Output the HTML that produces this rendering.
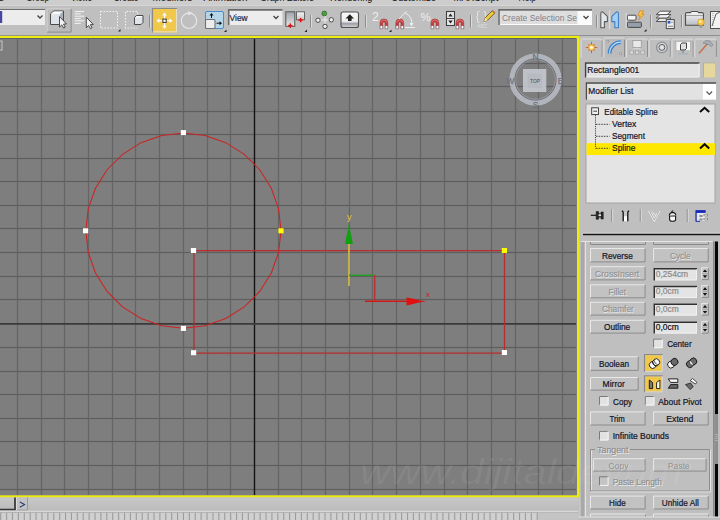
<!DOCTYPE html>
<html><head><meta charset="utf-8"><style>
*{margin:0;padding:0;box-sizing:border-box}
html,body{width:720px;height:520px;overflow:hidden;background:#bfbfbf;font-family:"Liberation Sans",sans-serif}
.a{position:absolute}
.t{position:absolute;white-space:nowrap;font-size:10px;line-height:12px;color:#101010}
</style></head><body>
<div class="a" style="left:0;top:0;width:720px;height:5px;background:#cdcdcd"></div>
<div class="a" style="left:0;top:5px;width:720px;height:30px;background:#bfbfbf;border-top:1px solid #d6d6d6"></div>
<div class="a" style="left:0;top:35px;width:720px;height:1px;background:#8e8e92"></div>
<svg style="position:absolute;left:0;top:0" width="720" height="520" viewBox="0 0 720 520">
<rect x="0" y="35.9" width="579" height="461.5" fill="#ecec10"/>
<rect x="0" y="38.3" width="577" height="457" fill="#7e7e7e"/>
<g stroke="#000" stroke-opacity="0.03" stroke-width="3"><line x1="17.5" y1="38" x2="17.5" y2="495"/><line x1="41.5" y1="38" x2="41.5" y2="495"/><line x1="64.5" y1="38" x2="64.5" y2="495"/><line x1="88.5" y1="38" x2="88.5" y2="495"/><line x1="112.5" y1="38" x2="112.5" y2="495"/><line x1="135.5" y1="38" x2="135.5" y2="495"/><line x1="159.5" y1="38" x2="159.5" y2="495"/><line x1="183.5" y1="38" x2="183.5" y2="495"/><line x1="207.5" y1="38" x2="207.5" y2="495"/><line x1="230.5" y1="38" x2="230.5" y2="495"/><line x1="278.5" y1="38" x2="278.5" y2="495"/><line x1="301.5" y1="38" x2="301.5" y2="495"/><line x1="325.5" y1="38" x2="325.5" y2="495"/><line x1="349.5" y1="38" x2="349.5" y2="495"/><line x1="372.5" y1="38" x2="372.5" y2="495"/><line x1="396.5" y1="38" x2="396.5" y2="495"/><line x1="420.5" y1="38" x2="420.5" y2="495"/><line x1="444.5" y1="38" x2="444.5" y2="495"/><line x1="467.5" y1="38" x2="467.5" y2="495"/><line x1="491.5" y1="38" x2="491.5" y2="495"/><line x1="515.5" y1="38" x2="515.5" y2="495"/><line x1="538.5" y1="38" x2="538.5" y2="495"/><line x1="562.5" y1="38" x2="562.5" y2="495"/><line x1="0" y1="63.5" x2="576" y2="63.5"/><line x1="0" y1="86.5" x2="576" y2="86.5"/><line x1="0" y1="111.5" x2="576" y2="111.5"/><line x1="0" y1="134.5" x2="576" y2="134.5"/><line x1="0" y1="158.5" x2="576" y2="158.5"/><line x1="0" y1="181.5" x2="576" y2="181.5"/><line x1="0" y1="205.5" x2="576" y2="205.5"/><line x1="0" y1="228.5" x2="576" y2="228.5"/><line x1="0" y1="252.5" x2="576" y2="252.5"/><line x1="0" y1="276.5" x2="576" y2="276.5"/><line x1="0" y1="299.5" x2="576" y2="299.5"/><line x1="0" y1="347.5" x2="576" y2="347.5"/><line x1="0" y1="371.5" x2="576" y2="371.5"/><line x1="0" y1="394.5" x2="576" y2="394.5"/><line x1="0" y1="418.5" x2="576" y2="418.5"/><line x1="0" y1="441.5" x2="576" y2="441.5"/><line x1="0" y1="465.5" x2="576" y2="465.5"/><line x1="0" y1="489.5" x2="576" y2="489.5"/></g><g stroke="#656565" stroke-width="1"><line x1="17.5" y1="38" x2="17.5" y2="495"/><line x1="41.5" y1="38" x2="41.5" y2="495"/><line x1="64.5" y1="38" x2="64.5" y2="495"/><line x1="88.5" y1="38" x2="88.5" y2="495"/><line x1="112.5" y1="38" x2="112.5" y2="495"/><line x1="135.5" y1="38" x2="135.5" y2="495"/><line x1="159.5" y1="38" x2="159.5" y2="495"/><line x1="183.5" y1="38" x2="183.5" y2="495"/><line x1="207.5" y1="38" x2="207.5" y2="495"/><line x1="230.5" y1="38" x2="230.5" y2="495"/><line x1="278.5" y1="38" x2="278.5" y2="495"/><line x1="301.5" y1="38" x2="301.5" y2="495"/><line x1="325.5" y1="38" x2="325.5" y2="495"/><line x1="349.5" y1="38" x2="349.5" y2="495"/><line x1="372.5" y1="38" x2="372.5" y2="495"/><line x1="396.5" y1="38" x2="396.5" y2="495"/><line x1="420.5" y1="38" x2="420.5" y2="495"/><line x1="444.5" y1="38" x2="444.5" y2="495"/><line x1="467.5" y1="38" x2="467.5" y2="495"/><line x1="491.5" y1="38" x2="491.5" y2="495"/><line x1="515.5" y1="38" x2="515.5" y2="495"/><line x1="538.5" y1="38" x2="538.5" y2="495"/><line x1="562.5" y1="38" x2="562.5" y2="495"/></g><g stroke="#5e5e5e" stroke-width="1"><line x1="0" y1="63.5" x2="576" y2="63.5"/><line x1="0" y1="86.5" x2="576" y2="86.5"/><line x1="0" y1="111.5" x2="576" y2="111.5"/><line x1="0" y1="134.5" x2="576" y2="134.5"/><line x1="0" y1="158.5" x2="576" y2="158.5"/><line x1="0" y1="181.5" x2="576" y2="181.5"/><line x1="0" y1="205.5" x2="576" y2="205.5"/><line x1="0" y1="228.5" x2="576" y2="228.5"/><line x1="0" y1="252.5" x2="576" y2="252.5"/><line x1="0" y1="276.5" x2="576" y2="276.5"/><line x1="0" y1="299.5" x2="576" y2="299.5"/><line x1="0" y1="347.5" x2="576" y2="347.5"/><line x1="0" y1="371.5" x2="576" y2="371.5"/><line x1="0" y1="394.5" x2="576" y2="394.5"/><line x1="0" y1="418.5" x2="576" y2="418.5"/><line x1="0" y1="441.5" x2="576" y2="441.5"/><line x1="0" y1="465.5" x2="576" y2="465.5"/><line x1="0" y1="489.5" x2="576" y2="489.5"/></g><line x1="254.5" y1="38" x2="254.5" y2="495" stroke="#141414" stroke-width="1.4"/><line x1="0" y1="323.9" x2="576" y2="323.9" stroke="#3a3a3a" stroke-width="1.8"/>
<line x1="0" y1="38.5" x2="576" y2="38.5" stroke="#5e5e6a" stroke-width="1"/>

<circle cx="535.5" cy="79.5" r="23.2" fill="none" stroke="#b8bcc4" stroke-opacity="0.88" stroke-width="5.8"/>
<circle cx="535.5" cy="79.5" r="20.6" fill="none" stroke="#50545e" stroke-width="0.8"/>
<circle cx="535.5" cy="79.5" r="19.8" fill="none" stroke="#a8acb4" stroke-opacity="0.7" stroke-width="0.8"/>
<rect x="523" y="69" width="23.3" height="23" fill="#c6c9d0" fill-opacity="0.9"/>
<rect x="527.5" y="73.5" width="14.5" height="14.5" fill="#b6b9c0" fill-opacity="0.9"/>
<text x="535" y="83.2" font-size="6" fill="#484c56" text-anchor="middle" font-family="Liberation Sans" textLength="10" lengthAdjust="spacingAndGlyphs">TOP</text>
<g font-family="Liberation Sans" font-size="8.5" fill="#70747f" stroke="#70747f" stroke-width="0.25" text-anchor="middle">
<text x="535.5" y="59.5">N</text>
<text x="535.5" y="108">S</text>
<text x="510.3" y="83.5">W</text>
<text x="560.5" y="83.5">E</text>
</g>

<polygon points="281.00,230.60 278.55,252.32 271.33,272.95 259.71,291.45 244.25,306.91 225.75,318.53 205.12,325.75 183.40,328.20 161.68,325.75 141.05,318.53 122.55,306.91 107.09,291.45 95.47,272.95 88.25,252.32 85.80,230.60 88.25,208.88 95.47,188.25 107.09,169.75 122.55,154.29 141.05,142.67 161.68,135.45 183.40,133.00 205.12,135.45 225.75,142.67 244.25,154.29 259.71,169.75 271.33,188.25 278.55,208.88" fill="none" stroke="#cc2424" stroke-width="1.05"/><path d="M193.95,250.5 L504.5,250.5 L504.5,353.1 L193.95,353.1 Z" fill="none" stroke="#b82c2c" stroke-width="1.25"/><rect x="180.80" y="130.10" width="5.2" height="5" fill="#fff"/><rect x="83.00" y="228.30" width="5.2" height="5" fill="#fff"/><rect x="278.40" y="228.30" width="5.2" height="5" fill="#ffff00"/><rect x="180.80" y="325.90" width="5.2" height="5" fill="#fff"/><rect x="190.90" y="248.00" width="5.2" height="5" fill="#fff"/><rect x="501.80" y="248.00" width="5.2" height="5" fill="#ffff00"/><rect x="191.00" y="350.20" width="5.2" height="5" fill="#fff"/><rect x="501.80" y="350.00" width="5.2" height="5" fill="#fff"/>
<line x1="349" y1="244" x2="349" y2="286" stroke="#d8c040" stroke-width="1.6"/>
<polygon points="348.9,223.5 350.2,231 351.8,238 352.9,244 345,244 346.1,238 347.7,231" fill="#10a010"/>
<text x="347" y="220" font-size="9" fill="#e8c830" font-family="Liberation Sans">y</text>
<line x1="349" y1="275.3" x2="375" y2="275.3" stroke="#20a020" stroke-width="1.4"/>
<line x1="374.7" y1="275" x2="374.7" y2="301.3" stroke="#c03030" stroke-width="1.4"/>
<line x1="365" y1="301.3" x2="407" y2="301.3" stroke="#d01818" stroke-width="1.5"/>
<polygon points="406.5,297.4 412,298.4 419,300.2 426,301.3 419,302.4 412,304.2 406.5,305.5" fill="#e01010"/>
<text x="426" y="297" font-size="8" fill="#d02020" font-family="Liberation Sans">x</text>

<rect x="-3" y="41" width="5" height="9" fill="none" stroke="#c8c8c8" stroke-width="1"/>
</svg>
<svg class="a" style="left:0;top:0" width="720" height="36" viewBox="0 0 720 36"><text x="-22" y="0.6" font-size="11" fill="#141414" font-family="Liberation Sans" textLength="26" lengthAdjust="spacingAndGlyphs">Tools</text><text x="26" y="0.6" font-size="11" fill="#141414" font-family="Liberation Sans" textLength="23" lengthAdjust="spacingAndGlyphs">Group</text><text x="71" y="0.6" font-size="11" fill="#141414" font-family="Liberation Sans" textLength="21" lengthAdjust="spacingAndGlyphs">Views</text><text x="113.5" y="0.6" font-size="11" fill="#141414" font-family="Liberation Sans" textLength="25" lengthAdjust="spacingAndGlyphs">Create</text><text x="152.5" y="0.6" font-size="11" fill="#141414" font-family="Liberation Sans" textLength="40" lengthAdjust="spacingAndGlyphs">Modifiers</text><text x="203.5" y="0.6" font-size="11" fill="#141414" font-family="Liberation Sans" textLength="44" lengthAdjust="spacingAndGlyphs">Animation</text><text x="260" y="0.6" font-size="11" fill="#141414" font-family="Liberation Sans" textLength="54" lengthAdjust="spacingAndGlyphs">Graph Editors</text><text x="330" y="0.6" font-size="11" fill="#141414" font-family="Liberation Sans" textLength="42.5" lengthAdjust="spacingAndGlyphs">Rendering</text><text x="391" y="0.6" font-size="11" fill="#141414" font-family="Liberation Sans" textLength="45" lengthAdjust="spacingAndGlyphs">Customize</text><text x="453.5" y="0.6" font-size="11" fill="#141414" font-family="Liberation Sans" textLength="45" lengthAdjust="spacingAndGlyphs">MAXScript</text><text x="518.5" y="0.6" font-size="11" fill="#141414" font-family="Liberation Sans" textLength="17.5" lengthAdjust="spacingAndGlyphs">Help</text><line x1="149.5" y1="15" x2="149.5" y2="27.5" stroke="#8c8c8c" stroke-width="1"/><line x1="150.5" y1="15" x2="150.5" y2="27.5" stroke="#dcdcdc" stroke-width="1"/><line x1="310.5" y1="15" x2="310.5" y2="27.5" stroke="#8c8c8c" stroke-width="1"/><line x1="311.5" y1="15" x2="311.5" y2="27.5" stroke="#dcdcdc" stroke-width="1"/><line x1="365.5" y1="15" x2="365.5" y2="27.5" stroke="#8c8c8c" stroke-width="1"/><line x1="366.5" y1="15" x2="366.5" y2="27.5" stroke="#dcdcdc" stroke-width="1"/><line x1="470.5" y1="15" x2="470.5" y2="27.5" stroke="#8c8c8c" stroke-width="1"/><line x1="471.5" y1="15" x2="471.5" y2="27.5" stroke="#dcdcdc" stroke-width="1"/><line x1="596.5" y1="15" x2="596.5" y2="27.5" stroke="#8c8c8c" stroke-width="1"/><line x1="597.5" y1="15" x2="597.5" y2="27.5" stroke="#dcdcdc" stroke-width="1"/><line x1="650.5" y1="15" x2="650.5" y2="27.5" stroke="#8c8c8c" stroke-width="1"/><line x1="651.5" y1="15" x2="651.5" y2="27.5" stroke="#dcdcdc" stroke-width="1"/><line x1="681.5" y1="15" x2="681.5" y2="27.5" stroke="#8c8c8c" stroke-width="1"/><line x1="682.5" y1="15" x2="682.5" y2="27.5" stroke="#dcdcdc" stroke-width="1"/><rect x="-2" y="9" width="47" height="16" fill="#ececec"/><line x1="-2" y1="9.5" x2="45" y2="9.5" stroke="#6e6e6e"/><rect x="0" y="11" width="2.2" height="12" fill="#4646a0"/><polyline points="37.5,15.5 40,18 42.5,15.5" fill="none" stroke="#444" stroke-width="1.3"/><rect x="46.6" y="8.3" width="25" height="24.3" fill="#bababa"/><path d="M47.1,32.6 L47.1,8.8 L71.5,8.8" fill="none" stroke="#d2d2d2" stroke-width="1"/><path d="M47.1,32.1 L71.1,32.1 L71.1,8.8" fill="none" stroke="#8a8a8a" stroke-width="1"/><path d="M50.5,14 L53.5,11 L63.5,11 L63.5,21.5 L60.5,24.5 L50.5,24.5 Z" fill="#dfe4ea" stroke="#4a4a4a" stroke-width="1"/><path d="M51,14 L54,11.5 L63,11.5 L60,14 Z" fill="#fafafa"/><path d="M60,14 L63,11.5 L63,21.5 L60,24 Z" fill="#aab0b8"/><path d="M59.5,16.6 L59.5,27.1 L61.8,24.900000000000002 L63.7,28.1 L65.3,27.1 L63.5,24.1 L66.5,23.900000000000002 Z" fill="#f4f4f4" stroke="#3a3a3a" stroke-width="0.9" stroke-linejoin="round"/><line x1="74.7" y1="11.5" x2="84.2" y2="11.5" stroke="#f0f0f0" stroke-width="1.1"/><line x1="74.7" y1="13.8" x2="80.7" y2="13.8" stroke="#f0f0f0" stroke-width="1.1"/><line x1="74.7" y1="16.2" x2="84.2" y2="16.2" stroke="#f0f0f0" stroke-width="1.1"/><line x1="74.7" y1="18.6" x2="80.7" y2="18.6" stroke="#f0f0f0" stroke-width="1.1"/><line x1="74.7" y1="20.8" x2="84.2" y2="20.8" stroke="#f0f0f0" stroke-width="1.1"/><line x1="74.7" y1="23.4" x2="80.7" y2="23.4" stroke="#f0f0f0" stroke-width="1.1"/><path d="M86.3,17.2 L86.3,27.7 L88.6,25.5 L90.5,28.7 L92.1,27.7 L90.3,24.7 L93.3,24.5 Z" fill="#f4f4f4" stroke="#3a3a3a" stroke-width="0.9" stroke-linejoin="round"/><rect x="100.5" y="11.5" width="17" height="16.5" fill="none" stroke="#f2f2f2" stroke-width="1.1" stroke-dasharray="1.6,1.4"/><polygon points="118,31.5 120.5,29 120.5,31.5" fill="#202020"/><path d="M137.5,14 L137.5,11.5 L125.5,11.5 L125.5,28 L137.5,28" fill="none" stroke="#f2f2f2" stroke-width="1.1" stroke-dasharray="1.6,1.4"/><path d="M134.5,17.5 L136.5,15.5 L143,15.5 L143,22.5 L141,24.5 L134.5,24.5 Z" fill="#dfe4ea" stroke="#4a4a4a" stroke-width="1"/><path d="M135,17.5 L137,16 L142.5,16 L140.5,17.5 Z" fill="#fff"/><rect x="152" y="8.5" width="25" height="24" fill="#f0c84c"/><path d="M152.5,32.5 L152.5,8.5 L177,8.5" fill="none" stroke="#8a8a8a" stroke-width="1.2"/><path d="M153,31.8 L176.5,31.8 L176.5,9" fill="none" stroke="#e8e0c0" stroke-width="1"/><g fill="#fbfbfb"><polygon points="164.5,12.6 162.1,15.6 166.9,15.6"/><polygon points="164.5,28.8 162.1,25.8 166.9,25.8"/><polygon points="156.4,20.7 159.4,18.3 159.4,23.1"/><polygon points="172.6,20.7 169.6,18.3 169.6,23.1"/><rect x="163.9" y="15.3" width="1.3" height="3.5"/><rect x="163.9" y="22.6" width="1.3" height="3.5"/><rect x="159.2" y="20.05" width="3.5" height="1.3"/><rect x="166.4" y="20.05" width="3.5" height="1.3"/></g><rect x="162.9" y="19.1" width="3.3" height="3.3" fill="#fff" stroke="#222" stroke-width="0.9"/><circle cx="189" cy="20.8" r="7.7" fill="none" stroke="#e6e6e6" stroke-width="1.1"/><polygon points="188,11 192.5,13 188,15.5" fill="#e6e6e6"/><rect x="205.5" y="11.5" width="18" height="17" rx="1.5" fill="#b4d6e8" stroke="#4c8cc8" stroke-width="1"/><rect x="205.5" y="19.5" width="9.5" height="9" rx="1" fill="#ececec" stroke="#707070" stroke-width="1.1"/><line x1="211.5" y1="14" x2="211.5" y2="18" stroke="#111" stroke-width="1"/><polygon points="211.5,13 209.5,15.5 213.5,15.5" fill="#111"/><line x1="216.5" y1="23.2" x2="221" y2="23.2" stroke="#111" stroke-width="1"/><polygon points="222,23.2 219.5,21.2 219.5,25.2" fill="#111"/><polygon points="224,32.0 226.5,29.5 226.5,32.0" fill="#202020"/><rect x="228" y="9.5" width="54.5" height="15.5" fill="#ececec"/><path d="M228.7,25 L228.7,9.9 L282.5,9.9" fill="none" stroke="#6a6a6a" stroke-width="1.6"/><text x="229.6" y="20.8" font-size="9.6" fill="#202040" stroke="#202040" stroke-width="0.2" font-family="Liberation Sans" textLength="18" lengthAdjust="spacingAndGlyphs">View</text><polyline points="273.5,16 276,18.5 278.5,16" fill="none" stroke="#444" stroke-width="1.3"/><defs><linearGradient id="pg" x1="0" y1="0" x2="0" y2="1"><stop offset="0" stop-color="#a0a4ac"/><stop offset="1" stop-color="#e4e4e4"/></linearGradient><linearGradient id="pg2" x1="0" y1="0" x2="0" y2="1"><stop offset="0" stop-color="#f4f4f4"/><stop offset="1" stop-color="#c8c8c8"/></linearGradient><linearGradient id="kb" x1="0" y1="0" x2="0" y2="1"><stop offset="0" stop-color="#fafafa"/><stop offset="0.6" stop-color="#eeeeee"/><stop offset="0.75" stop-color="#9ca0a8"/><stop offset="1" stop-color="#d8d8d8"/></linearGradient></defs><rect x="285.8" y="11.8" width="9" height="14.5" fill="url(#pg)" stroke="#555" stroke-width="1"/><rect x="296.5" y="11.8" width="8" height="8" fill="url(#pg2)" stroke="#666" stroke-width="1"/><g fill="#e01010"><rect x="289.6" y="23.4" width="1.4" height="4.4"/><rect x="288.1" y="24.9" width="4.4" height="1.4"/><rect x="299.9" y="17.9" width="1.4" height="4.4"/><rect x="298.4" y="19.4" width="4.4" height="1.4"/></g><polygon points="304.5,32.0 307.0,29.5 307.0,32.0" fill="#202020"/><line x1="318" y1="20" x2="331" y2="20" stroke="#e8e8e8" stroke-width="1.2"/><line x1="325" y1="14" x2="325" y2="26" stroke="#e8e8e8" stroke-width="1.2"/><g fill="#f0f0f0" stroke="#4a4a4a" stroke-width="1"><circle cx="318" cy="20.2" r="2.2"/><circle cx="331.3" cy="19.8" r="2.2"/><circle cx="325" cy="26.4" r="2.2"/></g><circle cx="324.3" cy="13.5" r="2.4" fill="#50a040" stroke="#2a6a2a" stroke-width="0.8"/><rect x="341" y="12" width="17.5" height="15.5" rx="2" fill="url(#kb)" stroke="#505050" stroke-width="1.1"/><polygon points="349.8,14.2 345.5,18.5 348,18.5 348,21 351.6,21 351.6,18.5 354,18.5" fill="#222"/><text x="372" y="21.3" font-size="12" fill="#eeeeee" font-family="Liberation Sans">2</text><path d="M380.0,28.8 L380.0,22.8 A3.9,3.9 0 0 1 387.8,22.8 L387.8,28.8 L385.1,28.8 L385.1,23.1 A1.2,1.2 0 0 0 382.7,23.1 L382.7,28.8 Z" fill="#c83c3c" stroke="#8a3030" stroke-width="0.5"/><path d="M380.8,22.400000000000002 A3.2,3.2 0 0 1 387.0,22.400000000000002" fill="none" stroke="#e88080" stroke-width="0.8"/><rect x="380.0" y="25.8" width="2.7" height="3" fill="#9aa2ae"/><rect x="385.1" y="25.8" width="2.7" height="3" fill="#9aa2ae"/><rect x="380.7" y="26.1" width="1.4" height="2.2" fill="#ffffff"/><rect x="385.8" y="26.1" width="1.4" height="2.2" fill="#ffffff"/><polygon points="389,32.0 391.5,29.5 391.5,32.0" fill="#202020"/><path d="M395.8,28.8 L395.8,22.8 A3.9,3.9 0 0 1 403.6,22.8 L403.6,28.8 L400.90000000000003,28.8 L400.90000000000003,23.1 A1.2,1.2 0 0 0 398.5,23.1 L398.5,28.8 Z" fill="#c83c3c" stroke="#8a3030" stroke-width="0.5"/><path d="M396.6,22.400000000000002 A3.2,3.2 0 0 1 402.8,22.400000000000002" fill="none" stroke="#e88080" stroke-width="0.8"/><rect x="395.8" y="25.8" width="2.7" height="3" fill="#9aa2ae"/><rect x="400.90000000000003" y="25.8" width="2.7" height="3" fill="#9aa2ae"/><rect x="396.5" y="26.1" width="1.4" height="2.2" fill="#ffffff"/><rect x="401.6" y="26.1" width="1.4" height="2.2" fill="#ffffff"/><path d="M399,19 L406.5,11 M405,13 A10,10 0 0 1 411.5,25" fill="none" stroke="#eeeeee" stroke-width="1"/><line x1="405" y1="27.5" x2="415" y2="27.5" stroke="#eeeeee"/><polygon points="411.5,26.5 409.5,23 413.5,23" fill="#eee"/><text x="420.5" y="21.3" font-size="11.5" fill="#eeeeee" font-family="Liberation Sans">%</text><path d="M431.0,28.8 L431.0,22.8 A3.9,3.9 0 0 1 438.8,22.8 L438.8,28.8 L436.1,28.8 L436.1,23.1 A1.2,1.2 0 0 0 433.7,23.1 L433.7,28.8 Z" fill="#c83c3c" stroke="#8a3030" stroke-width="0.5"/><path d="M431.8,22.400000000000002 A3.2,3.2 0 0 1 438.0,22.400000000000002" fill="none" stroke="#e88080" stroke-width="0.8"/><rect x="431.0" y="25.8" width="2.7" height="3" fill="#9aa2ae"/><rect x="436.1" y="25.8" width="2.7" height="3" fill="#9aa2ae"/><rect x="431.7" y="26.1" width="1.4" height="2.2" fill="#ffffff"/><rect x="436.8" y="26.1" width="1.4" height="2.2" fill="#ffffff"/><rect x="446.5" y="11.5" width="8" height="14" fill="#e8e8e8" stroke="#404040" stroke-width="1.1"/><line x1="446.5" y1="18.5" x2="454.5" y2="18.5" stroke="#404040"/><polygon points="450.5,13.5 448.3,16.5 452.7,16.5" fill="#222"/><polygon points="450.5,23.5 448.3,20.5 452.7,20.5" fill="#222"/><path d="M456.0,28.8 L456.0,22.8 A3.9,3.9 0 0 1 463.8,22.8 L463.8,28.8 L461.1,28.8 L461.1,23.1 A1.2,1.2 0 0 0 458.7,23.1 L458.7,28.8 Z" fill="#c83c3c" stroke="#8a3030" stroke-width="0.5"/><path d="M456.8,22.400000000000002 A3.2,3.2 0 0 1 463.0,22.400000000000002" fill="none" stroke="#e88080" stroke-width="0.8"/><rect x="456.0" y="25.8" width="2.7" height="3" fill="#9aa2ae"/><rect x="461.1" y="25.8" width="2.7" height="3" fill="#9aa2ae"/><rect x="456.7" y="26.1" width="1.4" height="2.2" fill="#ffffff"/><rect x="461.8" y="26.1" width="1.4" height="2.2" fill="#ffffff"/><path d="M479.5,11.5 L478.6,11.5 Q477.6,11.5 477.6,12.8 L477.6,15.6 Q477.6,16.8 476.4,17 Q477.6,17.2 477.6,18.4 L477.6,21.2 Q477.6,22.5 478.6,22.5 L479.5,22.5 M483.5,11.5 L484.4,11.5 Q485.4,11.5 485.4,12.8 L485.4,15.6 Q485.4,16.8 486.6,17 Q485.4,17.2 485.4,18.4 L485.4,21.2 Q485.4,22.5 484.4,22.5 L483.5,22.5" fill="none" stroke="#e8e8e8" stroke-width="1"/><text x="477" y="28.3" font-size="4.8" fill="#dedede" font-family="Liberation Sans" textLength="10.5" lengthAdjust="spacingAndGlyphs">ABC</text><path d="M484,21.6 L485.2,17.8 L492.2,10.8 L494.6,13.2 L487.6,20.2 Z" fill="#f2c838" stroke="#5a4a20" stroke-width="0.8" stroke-linejoin="round"/><path d="M484,21.6 L485.2,17.8 L487.6,20.2 Z" fill="#f4e4c4"/><path d="M492.2,10.8 L494.6,13.2 L495.4,12.4 L493,10 Z" fill="#c87040"/><rect x="498.5" y="9.5" width="93.5" height="15.5" fill="#fbfbfb"/><rect x="500" y="11" width="77.5" height="13" fill="#dedede"/><path d="M499,25 L499,9.9 L592,9.9" fill="none" stroke="#6a6a6a" stroke-width="1.6"/><text x="502" y="21" font-size="9.8" fill="#80808c" font-family="Liberation Sans" textLength="75" lengthAdjust="spacingAndGlyphs">Create Selection Se</text><polyline points="583.5,16 586,18.5 588.5,16" fill="none" stroke="#444" stroke-width="1.3"/><path d="M600.8,27.8 L600.8,13.6 Q600.8,11.8 602.6,11.8 L607.4,16.4 L607.4,21.6 L604.4,21.6 L604.4,27.8 Z" fill="#e2e5ea" stroke="#5a5a5a" stroke-width="1.05" stroke-linejoin="round"/><path d="M618.4,27.8 L618.4,13.6 Q618.4,11.8 616.6,11.8 L611.8,16.4 L611.8,21.6 L614.8,21.6 L614.8,27.8 Z" fill="#a4d0f0" stroke="#3c7cc4" stroke-width="1.05" stroke-linejoin="round"/><line x1="609.6" y1="10.5" x2="609.6" y2="29" stroke="#e2e2e2" stroke-width="1"/><rect x="627.4" y="15.2" width="8.6" height="5" rx="1" fill="#f4f4f4" stroke="#4a4a4a" stroke-width="1"/><rect x="627.4" y="22.2" width="14" height="5.2" rx="1" fill="#969eaa" stroke="#4a4a4a" stroke-width="1"/><path d="M639.8,10.8 L643.6,10.8 L641.6,14.2 L644.2,14.2 L638.6,20.2 L640.4,15.8 L637.9,15.8 Z" fill="#f8c840" stroke="#d07818" stroke-width="0.6" stroke-linejoin="round"/><line x1="626.2" y1="13" x2="626.2" y2="28" stroke="#dedede"/><polygon points="644,31.5 646.5,29 646.5,31.5" fill="#202020"/><path d="M656.2,21.5 L660.2,18 L671,18 L667,21.5 Z" fill="#e8e8e8" stroke="#4a4a4a" stroke-width="0.9" stroke-linejoin="round"/><path d="M656.2,18 L660.2,14.5 L671,14.5 L667,18 Z" fill="#f0f0f0" stroke="#4a4a4a" stroke-width="0.9" stroke-linejoin="round"/><path d="M656.2,14.6 L660.2,11.2 L671,11.2 L667,14.6 Z" fill="#fafafa" stroke="#4a4a4a" stroke-width="0.9" stroke-linejoin="round"/><rect x="666.3" y="19.6" width="8" height="9" fill="#eeeeee" stroke="#4a4a4a" stroke-width="1"/><rect x="667.6" y="21" width="2.8" height="2.6" fill="#2f5fc0"/><line x1="668" y1="26.3" x2="673" y2="26.3" stroke="#6a6a6a" stroke-width="0.8"/><line x1="671" y1="22.3" x2="673.2" y2="22.3" stroke="#8a8a8a" stroke-width="0.8"/><defs><linearGradient id="fg" x1="0" y1="0" x2="0" y2="1"><stop offset="0" stop-color="#fafafa"/><stop offset="1" stop-color="#b8bcc2"/></linearGradient></defs><path d="M685.5,25.3 L685.5,14 Q685.5,12.6 687,12.6 L690.5,12.6 L691.5,11.5 L697.5,11.5 L698.5,12.6 L702,12.6 Q703.4,12.6 703.4,14 L703.4,25.3 Z" fill="url(#fg)" stroke="#4e4e4e" stroke-width="1.1" stroke-linejoin="round"/><line x1="686" y1="15.5" x2="703" y2="15.5" stroke="#8a8a8a" stroke-width="0.8"/><circle cx="701" cy="22.3" r="3.3" fill="#f8c848" stroke="#d09020" stroke-width="0.6"/><circle cx="700.2" cy="21.5" r="1.3" fill="#fff0b0"/><rect x="699.8" y="25.4" width="2.4" height="2.6" fill="#9a9a9a"/><rect x="710.5" y="11.5" width="12" height="17" fill="#f2f2f2" stroke="#505050"/><path d="M712,26 L714,20 L716,14 L720,12" fill="none" stroke="#3a3a3a" stroke-width="0.8"/><line x1="713" y1="13" x2="713" y2="27" stroke="#999" stroke-dasharray="1,1"/></svg>
<svg class="a" style="left:0;top:0" width="720" height="520" viewBox="0 0 720 520"><path d="M581.0,57.5 L581.0,40.5 Q581.0,39.0 582.5,39.0 L600.5,39.0 Q602.0,39.0 602.0,40.5 L602.0,57.5" fill="#bfbfbf" stroke="#dedede" stroke-width="1"/><line x1="602.0" y1="40.5" x2="602.0" y2="57" stroke="#8c8c8c" stroke-width="1"/><path d="M604.0,57.5 L604.0,39.5 Q604.0,38.0 605.5,38.0 L623,38.0 Q624.5,38.0 624.5,39.5 L624.5,57.5" fill="#bbbbbb" stroke="#dedede" stroke-width="1"/><line x1="624.5" y1="39.5" x2="624.5" y2="57" stroke="#8c8c8c" stroke-width="1"/><path d="M626.5,57.5 L626.5,40.5 Q626.5,39.0 628,39.0 L646,39.0 Q647.5,39.0 647.5,40.5 L647.5,57.5" fill="#bfbfbf" stroke="#dedede" stroke-width="1"/><line x1="647.5" y1="40.5" x2="647.5" y2="57" stroke="#8c8c8c" stroke-width="1"/><path d="M649.1,57.5 L649.1,40.6 Q649.1,39.1 650.6,39.1 L668.7,39.1 Q670.2,39.1 670.2,40.6 L670.2,57.5" fill="#bfbfbf" stroke="#dedede" stroke-width="1"/><line x1="670.2" y1="40.6" x2="670.2" y2="57" stroke="#8c8c8c" stroke-width="1"/><path d="M672.0,57.5 L672.0,40.6 Q672.0,39.1 673.5,39.1 L691.5,39.1 Q693.0,39.1 693.0,40.6 L693.0,57.5" fill="#bfbfbf" stroke="#dedede" stroke-width="1"/><line x1="693.0" y1="40.6" x2="693.0" y2="57" stroke="#8c8c8c" stroke-width="1"/><path d="M694.8,57.5 L694.8,40.6 Q694.8,39.1 696.3,39.1 L714.9,39.1 Q716.4,39.1 716.4,40.6 L716.4,57.5" fill="#bfbfbf" stroke="#dedede" stroke-width="1"/><line x1="716.4" y1="40.6" x2="716.4" y2="57" stroke="#8c8c8c" stroke-width="1"/><polygon points="591.50,40.90 592.34,45.47 594.89,44.11 593.53,46.66 598.10,47.50 593.53,48.34 594.89,50.89 592.34,49.53 591.50,54.10 590.66,49.53 588.11,50.89 589.47,48.34 584.90,47.50 589.47,46.66 588.11,44.11 590.66,45.47" fill="#c83c28"/><circle cx="591.5" cy="47.5" r="3.4" fill="#f0a030"/><circle cx="591.5" cy="47.5" r="2.1" fill="#fff4b0"/><circle cx="591.5" cy="47.5" r="1.1" fill="#ffffff"/><rect x="606.8" y="40.6" width="2" height="2" fill="#d0d0d0" stroke="#8a8a8a" stroke-width="0.5"/><rect x="619.8" y="52.8" width="2" height="2" fill="#d0d0d0" stroke="#8a8a8a" stroke-width="0.5"/><path d="M609.6,53.6 L609.6,53.3 A11.2,11.2 0 0 1 620.8,42.1" fill="none" stroke="#3a80cc" stroke-width="3.8"/><path d="M609.6,53.6 L609.6,53.3 A11.2,11.2 0 0 1 620.8,42.1" fill="none" stroke="#c4e0f6" stroke-width="1.1"/><rect x="632.8" y="40.5" width="8.5" height="7" fill="#e8e8e8" stroke="#9a9a9a" stroke-width="0.8"/><path d="M637,47.5 L637,50 M631.5,51 L634,48.5 L640,48.5 L642.5,51" fill="none" stroke="#d8d8d8" stroke-width="0.8"/><g fill="#e0e0e0" stroke="#9a9a9a" stroke-width="0.7"><rect x="629.8" y="51" width="3.5" height="3"/><rect x="635.3" y="51" width="3.5" height="3"/><rect x="640.8" y="51" width="3.5" height="3"/></g><circle cx="661.9" cy="47.4" r="5.3" fill="#d8d8d8" stroke="#8a8e96" stroke-width="1.3"/><circle cx="661.9" cy="47.4" r="3" fill="none" stroke="#5a5e66" stroke-width="1"/><circle cx="661.6" cy="47.4" r="1.2" fill="#e8e8e8"/><rect x="676" y="41.3" width="14.5" height="9.5" fill="#f6f6f6" stroke="#a0a0a0" stroke-width="0.6"/><path d="M680.5,44.5 L682,43 L686.5,43 L686.5,48.5 L685,50 L680.5,50 Z" fill="#e0e0e0" stroke="#404040" stroke-width="1"/><line x1="683" y1="51" x2="683" y2="53" stroke="#8a9aae" stroke-width="1.6"/><line x1="678" y1="53.8" x2="688" y2="53.8" stroke="#9aaabb" stroke-width="0.8"/><line x1="699" y1="53.5" x2="707.5" y2="43.5" stroke="#c87050" stroke-width="1.5"/><path d="M703,43 L706,40.5 L710,41 L713,45 L711.5,46.5 L708.5,44.5 Z" fill="#a8aeb6" stroke="#7a7e86" stroke-width="0.6"/><rect x="585" y="62.3" width="114.6" height="15.1" fill="#e2e2e2"/><path d="M585.6,77.4 L585.6,63 L699.6,63" fill="none" stroke="#404040" stroke-width="1.4"/><path d="M586.5,76.9 L699.1,76.9 L699.1,63.5" fill="none" stroke="#f0f0f0" stroke-width="1"/><text x="587.3" y="73.20" font-size="9.8" fill="#141428" stroke="#141428" stroke-width="0.22" font-family="Liberation Sans" textLength="52" lengthAdjust="spacingAndGlyphs" >Rectangle001</text><rect x="703.5" y="62.9" width="11.6" height="14.5" fill="#e6d89c"/><path d="M703.5,77.4 L703.5,62.9 L715.1,62.9" fill="none" stroke="#a8a8a8" stroke-width="0.8"/><rect x="585.8" y="82.3" width="130.3" height="17.5" fill="#e2e2e2"/><rect x="703" y="83.5" width="13" height="16" fill="#ffffff"/><path d="M586.4,99.8 L586.4,83 L716.1,83" fill="none" stroke="#4a4a4a" stroke-width="1.3"/><text x="588.3" y="94.30" font-size="9.8" fill="#141428" stroke="#141428" stroke-width="0.22" font-family="Liberation Sans" textLength="45" lengthAdjust="spacingAndGlyphs" >Modifier List</text><polyline points="706.5,91.5 709.3,94.3 712.1,91.5" fill="none" stroke="#555" stroke-width="1.2"/><rect x="586" y="104" width="129" height="99" fill="#e4e4e4" stroke="#a4a4a4" stroke-width="1"/><rect x="586.5" y="143.2" width="128.5" height="11.8" fill="#ffe800"/><rect x="591.7" y="107.8" width="6.8" height="6.8" fill="#f0f0f0" stroke="#303030" stroke-width="0.9"/><line x1="593.3" y1="111.2" x2="597" y2="111.2" stroke="#303030" stroke-width="0.9"/><line x1="595.5" y1="115" x2="595.5" y2="148.5" stroke="#383838" stroke-width="0.9" stroke-dasharray="1.2,1"/><line x1="596" y1="124.3" x2="609.5" y2="124.3" stroke="#383838" stroke-width="0.9" stroke-dasharray="1.6,1"/><line x1="596" y1="136.3" x2="609.5" y2="136.3" stroke="#383838" stroke-width="0.9" stroke-dasharray="1.6,1"/><line x1="596" y1="148.3" x2="609.5" y2="148.3" stroke="#383838" stroke-width="0.9" stroke-dasharray="1.6,1"/><text x="604.3" y="115.30" font-size="9.8" fill="#141428" stroke="#141428" stroke-width="0.22" font-family="Liberation Sans" textLength="53.5" lengthAdjust="spacingAndGlyphs" >Editable Spline</text><text x="612" y="127.30" font-size="9.8" fill="#141428" stroke="#141428" stroke-width="0.22" font-family="Liberation Sans" textLength="24.4" lengthAdjust="spacingAndGlyphs" >Vertex</text><text x="612" y="139.20" font-size="9.8" fill="#141428" stroke="#141428" stroke-width="0.22" font-family="Liberation Sans" textLength="33" lengthAdjust="spacingAndGlyphs" >Segment</text><text x="612" y="151.40" font-size="9.8" fill="#202010" stroke="#202010" stroke-width="0.22" font-family="Liberation Sans" textLength="23.5" lengthAdjust="spacingAndGlyphs" >Spline</text><polyline points="700,112 704.6,107.8 709.2,112" fill="none" stroke="#080808" stroke-width="2"/><polyline points="700,148.4 704.6,144.2 709.2,148.4" fill="none" stroke="#080808" stroke-width="2"/><line x1="590.8" y1="215.3" x2="596.5" y2="215.3" stroke="#1a1a1a" stroke-width="1.2"/><path d="M596.2,211.6 L598.4,211.6 L599.2,214 L600.6,214 L601.2,212 L603.2,212 L603.2,219 L601.2,219 L600.6,216.8 L599.2,216.8 L598.4,219.2 L596.2,219.2 Z" fill="#2a2a2a" stroke="#111" stroke-width="0.6"/><rect x="598.6" y="214.3" width="2.4" height="1.8" fill="#e8e8e8"/><line x1="611.7" y1="209" x2="611.7" y2="222" stroke="#8e8e8e"/><line x1="612.7" y1="209" x2="612.7" y2="222" stroke="#d8d8d8"/><line x1="640.3" y1="209" x2="640.3" y2="222" stroke="#8e8e8e"/><line x1="641.3" y1="209" x2="641.3" y2="222" stroke="#d8d8d8"/><line x1="687.3" y1="209" x2="687.3" y2="222" stroke="#8e8e8e"/><line x1="688.3" y1="209" x2="688.3" y2="222" stroke="#d8d8d8"/><rect x="623.8" y="212" width="3.6" height="4.5" fill="#c8c8c8"/><rect x="623.8" y="216.2" width="3.6" height="5" fill="#fcfcfc"/><path d="M621.8,210.8 Q623.2,211.2 623.2,212.6 L623.2,221.2 M629.2,210.8 Q627.8,211.2 627.8,212.6 L627.8,221.2" fill="none" stroke="#111" stroke-width="1.3"/><path d="M648.5,211 L654.3,221.5 L660,211 M651.5,213 L654.3,218.5 L657,213 M652,211.5 L656.5,216.5" fill="none" stroke="#ececec" stroke-width="1"/><path d="M650,212.5 L654.3,220 L658.5,212.5" fill="none" stroke="#a8a8a8" stroke-width="0.6"/><path d="M669.6,216 L669.6,219.4 Q669.6,221.2 672.6,221.2 Q675.6,221.2 675.6,219.4 L675.6,216 Z" fill="#fafafa" stroke="#151515" stroke-width="1.1"/><path d="M669.2,215.6 Q669.6,212.8 672.4,212.4 Q675.4,212.6 675.8,215" fill="#f0f0f0" stroke="#151515" stroke-width="1.1"/><path d="M671.4,212.6 Q671.6,210.6 673.2,210.8" fill="none" stroke="#151515" stroke-width="1"/><path d="M696,221.5 L696,210.8 L705.5,210.8" fill="none" stroke="#1828b8" stroke-width="1.2"/><rect x="696" y="210.5" width="9.6" height="2.4" fill="#1828b8"/><rect x="697" y="213" width="8" height="8" fill="#e4e6ee"/><path d="M696,221.3 L700,221.3" stroke="#1828b8" stroke-width="1"/><g fill="#8a8a8a"><rect x="699.5" y="215" width="3" height="2"/><rect x="703.5" y="214" width="4.5" height="2.2"/><rect x="703.5" y="218" width="4.5" height="2.2"/><rect x="699.5" y="218.5" width="3" height="2"/></g><g fill="#f0f0f0"><rect x="704.5" y="214.6" width="2.5" height="1"/><rect x="704.5" y="218.6" width="2.5" height="1"/></g><line x1="583" y1="233.2" x2="720" y2="233.2" stroke="#dcdcdc" stroke-width="1"/><line x1="583" y1="234.5" x2="720" y2="234.5" stroke="#141414" stroke-width="1.7"/><line x1="579.5" y1="36" x2="579.5" y2="520" stroke="#c6c6ce" stroke-width="1"/><path d="M581,241.5 L714,241.5" fill="none" stroke="#e4e4e4" stroke-width="1"/><rect x="581" y="242" width="3.5" height="278" fill="#a8a8a8"/><line x1="585.4" y1="242" x2="585.4" y2="520" stroke="#e8e8e8" stroke-width="1"/><line x1="713.5" y1="241" x2="713.5" y2="520" stroke="#8a8a8a" stroke-width="1"/><rect x="714.8" y="241.5" width="3.2" height="279" fill="#060606"/><rect x="714.8" y="414" width="3.2" height="50" fill="#8e8e8e"/><g stroke="#d0d0d0" stroke-width="0.6"><line x1="715.3" y1="434.5" x2="717.5" y2="434.5"/><line x1="715.3" y1="436.5" x2="717.5" y2="436.5"/><line x1="715.3" y1="438.5" x2="717.5" y2="438.5"/><line x1="715.3" y1="440.5" x2="717.5" y2="440.5"/></g><path d="M590.5,242 L590.5,244.5 L645.5,244.5 L645.5,242" fill="none" stroke="#8a8a8a"/><path d="M653.5,242 L653.5,244.5 L708.5,244.5 L708.5,242" fill="none" stroke="#8a8a8a"/><rect x="590" y="248" width="55.60000000000002" height="14.399999999999977" fill="#c2c2c2"/><path d="M590.5,261.9 L590.5,248.5 L645.1,248.5" fill="none" stroke="#e8e8e8" stroke-width="1"/><path d="M590.5,261.9 L645.1,261.9 L645.1,248.5" fill="none" stroke="#8a8a8a" stroke-width="1"/><text x="601.9" y="259.20" font-size="9.4" fill="#141428" stroke="#141428" stroke-width="0.22" font-family="Liberation Sans" textLength="31.0" lengthAdjust="spacingAndGlyphs" >Reverse</text><rect x="653.1" y="248" width="55.60000000000002" height="14.399999999999977" fill="#c2c2c2"/><path d="M653.6,261.9 L653.6,248.5 L708.2,248.5" fill="none" stroke="#e8e8e8" stroke-width="1"/><path d="M653.6,261.9 L708.2,261.9 L708.2,248.5" fill="none" stroke="#8a8a8a" stroke-width="1"/><text x="670.6" y="259.60" font-size="9.4" fill="#e6e6e6" stroke="#e6e6e6" stroke-width="0.22" font-family="Liberation Sans" textLength="20.800000000000068" lengthAdjust="spacingAndGlyphs" >Cycle</text><text x="669.9" y="258.90" font-size="9.4" fill="#939393" stroke="#939393" stroke-width="0.22" font-family="Liberation Sans" textLength="20.800000000000068" lengthAdjust="spacingAndGlyphs" >Cycle</text><rect x="590" y="266.2" width="55.60000000000002" height="14.199999999999989" fill="#c2c2c2"/><path d="M590.5,279.9 L590.5,266.7 L645.1,266.7" fill="none" stroke="#e8e8e8" stroke-width="1"/><path d="M590.5,279.9 L645.1,279.9 L645.1,266.7" fill="none" stroke="#8a8a8a" stroke-width="1"/><text x="595.7" y="277.70" font-size="9.4" fill="#e6e6e6" stroke="#e6e6e6" stroke-width="0.22" font-family="Liberation Sans" textLength="44.200000000000045" lengthAdjust="spacingAndGlyphs" >CrossInsert</text><text x="595" y="277.00" font-size="9.4" fill="#939393" stroke="#939393" stroke-width="0.22" font-family="Liberation Sans" textLength="44.200000000000045" lengthAdjust="spacingAndGlyphs" >CrossInsert</text><rect x="590" y="284.3" width="55.60000000000002" height="14.0" fill="#c2c2c2"/><path d="M590.5,297.8 L590.5,284.8 L645.1,284.8" fill="none" stroke="#e8e8e8" stroke-width="1"/><path d="M590.5,297.8 L645.1,297.8 L645.1,284.8" fill="none" stroke="#8a8a8a" stroke-width="1"/><text x="609.3000000000001" y="295.70" font-size="9.4" fill="#e6e6e6" stroke="#e6e6e6" stroke-width="0.22" font-family="Liberation Sans" textLength="17.399999999999977" lengthAdjust="spacingAndGlyphs" >Fillet</text><text x="608.6" y="295.00" font-size="9.4" fill="#939393" stroke="#939393" stroke-width="0.22" font-family="Liberation Sans" textLength="17.399999999999977" lengthAdjust="spacingAndGlyphs" >Fillet</text><rect x="590" y="301.8" width="55.60000000000002" height="13.800000000000011" fill="#c2c2c2"/><path d="M590.5,315.1 L590.5,302.3 L645.1,302.3" fill="none" stroke="#e8e8e8" stroke-width="1"/><path d="M590.5,315.1 L645.1,315.1 L645.1,302.3" fill="none" stroke="#8a8a8a" stroke-width="1"/><text x="602.6" y="312.60" font-size="9.4" fill="#e6e6e6" stroke="#e6e6e6" stroke-width="0.22" font-family="Liberation Sans" textLength="31.899999999999977" lengthAdjust="spacingAndGlyphs" >Chamfer</text><text x="601.9" y="311.90" font-size="9.4" fill="#939393" stroke="#939393" stroke-width="0.22" font-family="Liberation Sans" textLength="31.899999999999977" lengthAdjust="spacingAndGlyphs" >Chamfer</text><rect x="590" y="319.8" width="55.60000000000002" height="13.800000000000011" fill="#c2c2c2"/><path d="M590.5,333.1 L590.5,320.3 L645.1,320.3" fill="none" stroke="#e8e8e8" stroke-width="1"/><path d="M590.5,333.1 L645.1,333.1 L645.1,320.3" fill="none" stroke="#8a8a8a" stroke-width="1"/><text x="604" y="330.30" font-size="9.4" fill="#141428" stroke="#141428" stroke-width="0.22" font-family="Liberation Sans" textLength="26.200000000000045" lengthAdjust="spacingAndGlyphs" >Outline</text><rect x="653.5" y="268" width="43.5" height="12.399999999999977" fill="#e4e4e4"/><path d="M654.25,280.4 L654.25,268.75 L697,268.75" fill="none" stroke="#303030" stroke-width="1.5"/><path d="M655.0,279.9 L696.5,279.9 L696.5,269.5" fill="none" stroke="#f0f0f0" stroke-width="1"/><text x="655.7" y="276.70" font-size="9.4" fill="#8a8a8a" stroke="#8a8a8a" stroke-width="0.22" font-family="Liberation Sans" textLength="32.5" lengthAdjust="spacingAndGlyphs" >0,254cm</text><rect x="653.5" y="285.8" width="43.5" height="12.199999999999989" fill="#e4e4e4"/><path d="M654.25,298 L654.25,286.55 L697,286.55" fill="none" stroke="#303030" stroke-width="1.5"/><path d="M655.0,297.5 L696.5,297.5 L696.5,287.3" fill="none" stroke="#f0f0f0" stroke-width="1"/><text x="655.7" y="294.30" font-size="9.4" fill="#8a8a8a" stroke="#8a8a8a" stroke-width="0.22" font-family="Liberation Sans" textLength="23" lengthAdjust="spacingAndGlyphs" >0,0cm</text><rect x="653.5" y="303.6" width="43.5" height="12.0" fill="#e4e4e4"/><path d="M654.25,315.6 L654.25,304.35 L697,304.35" fill="none" stroke="#303030" stroke-width="1.5"/><path d="M655.0,315.1 L696.5,315.1 L696.5,305.1" fill="none" stroke="#f0f0f0" stroke-width="1"/><text x="655.7" y="311.90" font-size="9.4" fill="#8a8a8a" stroke="#8a8a8a" stroke-width="0.22" font-family="Liberation Sans" textLength="23" lengthAdjust="spacingAndGlyphs" >0,0cm</text><rect x="653.5" y="321.6" width="43.5" height="12.0" fill="#e4e4e4"/><path d="M654.25,333.6 L654.25,322.35 L697,322.35" fill="none" stroke="#303030" stroke-width="1.5"/><path d="M655.0,333.1 L696.5,333.1 L696.5,323.1" fill="none" stroke="#f0f0f0" stroke-width="1"/><text x="655.7" y="329.90" font-size="9.4" fill="#101020" stroke="#101020" stroke-width="0.22" font-family="Liberation Sans" textLength="23" lengthAdjust="spacingAndGlyphs" >0,0cm</text><rect x="701.2" y="267.3" width="7.5" height="12.6" fill="#c2c2c2"/><path d="M701.7,279.90000000000003 L701.7,267.8 L708.7,267.8" fill="none" stroke="#e8e8e8"/><path d="M701.7,279.6 L708.4000000000001,279.6 L708.4000000000001,267.8" fill="none" stroke="#8a8a8a"/><line x1="702.2" y1="273.6" x2="708.2" y2="273.6" stroke="#a0a0a0" stroke-width="0.8"/><polygon points="705.0,269.5 702.8,272.1 707.2,272.1" fill="#111"/><polygon points="705.0,277.90000000000003 702.8,275.3 707.2,275.3" fill="#111"/><rect x="701.2" y="285.1" width="7.5" height="12.6" fill="#c2c2c2"/><path d="M701.7,297.70000000000005 L701.7,285.6 L708.7,285.6" fill="none" stroke="#e8e8e8"/><path d="M701.7,297.40000000000003 L708.4000000000001,297.40000000000003 L708.4000000000001,285.6" fill="none" stroke="#8a8a8a"/><line x1="702.2" y1="291.40000000000003" x2="708.2" y2="291.40000000000003" stroke="#a0a0a0" stroke-width="0.8"/><polygon points="705.0,287.3 702.8,289.90000000000003 707.2,289.90000000000003" fill="#111"/><polygon points="705.0,295.70000000000005 702.8,293.1 707.2,293.1" fill="#111"/><rect x="701.2" y="302.9" width="7.5" height="12.6" fill="#c2c2c2"/><path d="M701.7,315.5 L701.7,303.4 L708.7,303.4" fill="none" stroke="#e8e8e8"/><path d="M701.7,315.2 L708.4000000000001,315.2 L708.4000000000001,303.4" fill="none" stroke="#8a8a8a"/><line x1="702.2" y1="309.2" x2="708.2" y2="309.2" stroke="#a0a0a0" stroke-width="0.8"/><polygon points="705.0,305.09999999999997 702.8,307.7 707.2,307.7" fill="#111"/><polygon points="705.0,313.5 702.8,310.9 707.2,310.9" fill="#111"/><rect x="701.2" y="320.9" width="7.5" height="12.6" fill="#c2c2c2"/><path d="M701.7,333.5 L701.7,321.4 L708.7,321.4" fill="none" stroke="#e8e8e8"/><path d="M701.7,333.2 L708.4000000000001,333.2 L708.4000000000001,321.4" fill="none" stroke="#8a8a8a"/><line x1="702.2" y1="327.2" x2="708.2" y2="327.2" stroke="#a0a0a0" stroke-width="0.8"/><polygon points="705.0,323.09999999999997 702.8,325.7 707.2,325.7" fill="#111"/><polygon points="705.0,331.5 702.8,328.9 707.2,328.9" fill="#111"/><rect x="653.1" y="338.6" width="9.6" height="9.6" fill="#e2e2e2"/><path d="M653.6,348.20000000000005 L653.6,339.1 L662.7,339.1" fill="none" stroke="#7a7a7a" stroke-width="1"/><path d="M653.6,347.70000000000005 L662.2,347.70000000000005 L662.2,339.1" fill="none" stroke="#f4f4f4" stroke-width="1"/><text x="667.2" y="347.30" font-size="9.4" fill="#141428" stroke="#141428" stroke-width="0.22" font-family="Liberation Sans" textLength="24.4" lengthAdjust="spacingAndGlyphs" >Center</text><rect x="590" y="356.3" width="48.700000000000045" height="14.5" fill="#c2c2c2"/><path d="M590.5,370.3 L590.5,356.8 L638.2,356.8" fill="none" stroke="#e8e8e8" stroke-width="1"/><path d="M590.5,370.3 L638.2,370.3 L638.2,356.8" fill="none" stroke="#8a8a8a" stroke-width="1"/><text x="599" y="367.40" font-size="9.4" fill="#141428" stroke="#141428" stroke-width="0.22" font-family="Liberation Sans" textLength="30" lengthAdjust="spacingAndGlyphs" >Boolean</text><rect x="590" y="377" width="48.700000000000045" height="13.600000000000023" fill="#c2c2c2"/><path d="M590.5,390.1 L590.5,377.5 L638.2,377.5" fill="none" stroke="#e8e8e8" stroke-width="1"/><path d="M590.5,390.1 L638.2,390.1 L638.2,377.5" fill="none" stroke="#8a8a8a" stroke-width="1"/><text x="602.6" y="387.00" font-size="9.4" fill="#141428" stroke="#141428" stroke-width="0.22" font-family="Liberation Sans" textLength="22.199999999999932" lengthAdjust="spacingAndGlyphs" >Mirror</text><rect x="644" y="354" width="18.7" height="17.80000000000001" fill="#bfbfbf"/><path d="M644.5,371.8 L644.5,354.5 L662.7,354.5" fill="none" stroke="#8a8a8a" stroke-width="1.2"/><path d="M645,371.3 L662.2,371.3 L662.2,355" fill="none" stroke="#dcdcdc" stroke-width="1"/><rect x="645.6" y="355.3" width="16.4" height="15.50000000000001" fill="#f0c84c"/><rect x="644" y="375.3" width="18.7" height="17.0" fill="#bfbfbf"/><path d="M644.5,392.3 L644.5,375.8 L662.7,375.8" fill="none" stroke="#8a8a8a" stroke-width="1.2"/><path d="M645,391.8 L662.2,391.8 L662.2,376.3" fill="none" stroke="#dcdcdc" stroke-width="1"/><rect x="645.6" y="376.6" width="16.4" height="14.7" fill="#f0c84c"/><g transform="translate(654.5,363.6) rotate(-38)"><rect x="-5.6" y="-3.4" width="7" height="6.8" rx="3.3" fill="#fafafa" stroke="#111" stroke-width="0.85"/><rect x="-1.4" y="-3.4" width="7" height="6.8" rx="3.3" fill="#fafafa" stroke="#111" stroke-width="0.85"/></g><g transform="translate(654.5,363.6) rotate(-38)"><path d="M-0.2,-3.1 Q-2.2,0 -0.2,3.1" fill="none" stroke="#111" stroke-width="0.8"/><path d="M1.8,-3.1 Q-0.2,0 1.8,3.1" fill="none" stroke="#111" stroke-width="0.6"/></g><g transform="translate(672.8,363.2) rotate(-38)"><rect x="-5.6" y="-3.4" width="7" height="6.8" rx="3.3" fill="#fafafa" stroke="#111" stroke-width="0.85"/><rect x="-1.4" y="-3.4" width="7" height="6.8" rx="3.3" fill="#6a6a6a" stroke="#111" stroke-width="0.85"/></g><g transform="translate(691.6,362.8) rotate(-38)"><rect x="-5.6" y="-3.4" width="7" height="6.8" rx="3.3" fill="#6a6a6a" stroke="#111" stroke-width="0.85"/><rect x="-1.4" y="-3.4" width="7" height="6.8" rx="3.3" fill="#6a6a6a" stroke="#111" stroke-width="0.85"/><path d="M-0.6,-3.1 Q1.2,0 -0.6,3.1 Q-2.2,0 -0.6,-3.1 Z" fill="#f4f4f4"/></g><path d="M649.3,388.6 L649.3,380 L652.6,382.6 L652.6,388.6 Z" fill="#7a7a7a" stroke="#111" stroke-width="0.9" stroke-linejoin="round"/><path d="M656.6,388.6 L656.6,382.6 L659.9,380 L659.9,388.6 Z" fill="#fafafa" stroke="#111" stroke-width="0.9" stroke-linejoin="round"/><path d="M668.3,378.9 L677.8,378.9 L677.8,382.4 L670.6,382.4 Z" fill="#fafafa" stroke="#111" stroke-width="0.9" stroke-linejoin="round"/><path d="M670.6,384.6 L677.8,384.6 L677.8,388.2 L668.3,388.2 Z" fill="#6a6a6a" stroke="#111" stroke-width="0.9" stroke-linejoin="round"/><path d="M690.2,380.6 L692.6,378.5 L696.9,382.3 L695.4,384 Z" fill="#fafafa" stroke="#222" stroke-width="0.8" stroke-linejoin="round"/><path d="M685.5,384.6 L690.6,383.1 L693.2,386.6 L690.2,389.6 Z" fill="#6a6a6a" stroke="#222" stroke-width="0.8" stroke-linejoin="round"/><rect x="599" y="396" width="9.6" height="9.6" fill="#e2e2e2"/><path d="M599.5,405.6 L599.5,396.5 L608.6,396.5" fill="none" stroke="#7a7a7a" stroke-width="1"/><path d="M599.5,405.1 L608.1,405.1 L608.1,396.5" fill="none" stroke="#f4f4f4" stroke-width="1"/><text x="613" y="404.70" font-size="9.4" fill="#141428" stroke="#141428" stroke-width="0.22" font-family="Liberation Sans" textLength="19" lengthAdjust="spacingAndGlyphs" >Copy</text><rect x="644.8" y="396" width="9.6" height="9.6" fill="#e2e2e2"/><path d="M645.3,405.6 L645.3,396.5 L654.4,396.5" fill="none" stroke="#7a7a7a" stroke-width="1"/><path d="M645.3,405.1 L653.9,405.1 L653.9,396.5" fill="none" stroke="#f4f4f4" stroke-width="1"/><text x="658.2" y="404.70" font-size="9.4" fill="#141428" stroke="#141428" stroke-width="0.22" font-family="Liberation Sans" textLength="43.3" lengthAdjust="spacingAndGlyphs" >About Pivot</text><rect x="590" y="411.4" width="55.60000000000002" height="14.100000000000023" fill="#c2c2c2"/><path d="M590.5,425.0 L590.5,411.9 L645.1,411.9" fill="none" stroke="#e8e8e8" stroke-width="1"/><path d="M590.5,425.0 L645.1,425.0 L645.1,411.9" fill="none" stroke="#8a8a8a" stroke-width="1"/><text x="609.5" y="422.20" font-size="9.4" fill="#141428" stroke="#141428" stroke-width="0.22" font-family="Liberation Sans" textLength="15.299999999999955" lengthAdjust="spacingAndGlyphs" >Trim</text><rect x="653.1" y="411.4" width="55.60000000000002" height="14.100000000000023" fill="#c2c2c2"/><path d="M653.6,425.0 L653.6,411.9 L708.2,411.9" fill="none" stroke="#e8e8e8" stroke-width="1"/><path d="M653.6,425.0 L708.2,425.0 L708.2,411.9" fill="none" stroke="#8a8a8a" stroke-width="1"/><text x="666.3" y="422.20" font-size="9.4" fill="#141428" stroke="#141428" stroke-width="0.22" font-family="Liberation Sans" textLength="27.100000000000023" lengthAdjust="spacingAndGlyphs" >Extend</text><rect x="599" y="430.9" width="9.6" height="9.6" fill="#e2e2e2"/><path d="M599.5,440.5 L599.5,431.4 L608.6,431.4" fill="none" stroke="#7a7a7a" stroke-width="1"/><path d="M599.5,440.0 L608.1,440.0 L608.1,431.4" fill="none" stroke="#f4f4f4" stroke-width="1"/><text x="612.7" y="439.30" font-size="9.4" fill="#141428" stroke="#141428" stroke-width="0.22" font-family="Liberation Sans" textLength="56.3" lengthAdjust="spacingAndGlyphs" >Infinite Bounds</text><path d="M595,449.5 L590.5,449.5 L590.5,491 L709.5,491 L709.5,449.5 L630,449.5" fill="none" stroke="#8e8e8e" stroke-width="1"/><path d="M591.5,490 L591.5,450.5 M710.5,449.5 L710.5,492 L590.5,492" fill="none" stroke="#e4e4e4" stroke-width="1"/><text x="597.9" y="454.10" font-size="9.4" fill="#ececec" stroke="#ececec" stroke-width="0.22" font-family="Liberation Sans" textLength="31.2" lengthAdjust="spacingAndGlyphs" >Tangent</text><text x="597.2" y="453.30" font-size="9.4" fill="#8e8e8e" stroke="#8e8e8e" stroke-width="0.22" font-family="Liberation Sans" textLength="31.2" lengthAdjust="spacingAndGlyphs" >Tangent</text><rect x="592.9" y="458.2" width="52.700000000000045" height="13.400000000000034" fill="#c2c2c2"/><path d="M593.4,471.1 L593.4,458.7 L645.1,458.7" fill="none" stroke="#e8e8e8" stroke-width="1"/><path d="M593.4,471.1 L645.1,471.1 L645.1,458.7" fill="none" stroke="#8a8a8a" stroke-width="1"/><text x="609.3000000000001" y="469.30" font-size="9.4" fill="#e6e6e6" stroke="#e6e6e6" stroke-width="0.22" font-family="Liberation Sans" textLength="19.799999999999955" lengthAdjust="spacingAndGlyphs" >Copy</text><text x="608.6" y="468.60" font-size="9.4" fill="#939393" stroke="#939393" stroke-width="0.22" font-family="Liberation Sans" textLength="19.799999999999955" lengthAdjust="spacingAndGlyphs" >Copy</text><rect x="653.1" y="458.2" width="53.5" height="13.400000000000034" fill="#c2c2c2"/><path d="M653.6,471.1 L653.6,458.7 L706.1,458.7" fill="none" stroke="#e8e8e8" stroke-width="1"/><path d="M653.6,471.1 L706.1,471.1 L706.1,458.7" fill="none" stroke="#8a8a8a" stroke-width="1"/><text x="668.8000000000001" y="469.30" font-size="9.4" fill="#e6e6e6" stroke="#e6e6e6" stroke-width="0.22" font-family="Liberation Sans" textLength="21.699999999999932" lengthAdjust="spacingAndGlyphs" >Paste</text><text x="668.1" y="468.60" font-size="9.4" fill="#939393" stroke="#939393" stroke-width="0.22" font-family="Liberation Sans" textLength="21.699999999999932" lengthAdjust="spacingAndGlyphs" >Paste</text><rect x="599" y="476.3" width="9.6" height="9.6" fill="#c4c4c4"/><path d="M599.5,485.90000000000003 L599.5,476.8 L608.6,476.8" fill="none" stroke="#7a7a7a" stroke-width="1"/><path d="M599.5,485.40000000000003 L608.1,485.40000000000003 L608.1,476.8" fill="none" stroke="#f4f4f4" stroke-width="1"/><text x="613.5" y="485.70" font-size="9.4" fill="#ececec" stroke="#ececec" stroke-width="0.22" font-family="Liberation Sans" textLength="49.1" lengthAdjust="spacingAndGlyphs" >Paste Length</text><text x="612.7" y="484.90" font-size="9.4" fill="#8e8e8e" stroke="#8e8e8e" stroke-width="0.22" font-family="Liberation Sans" textLength="49.1" lengthAdjust="spacingAndGlyphs" >Paste Length</text><rect x="590" y="495.6" width="55.60000000000002" height="13.899999999999977" fill="#c2c2c2"/><path d="M590.5,509.0 L590.5,496.1 L645.1,496.1" fill="none" stroke="#e8e8e8" stroke-width="1"/><path d="M590.5,509.0 L645.1,509.0 L645.1,496.1" fill="none" stroke="#8a8a8a" stroke-width="1"/><text x="609.1" y="506.10" font-size="9.4" fill="#141428" stroke="#141428" stroke-width="0.22" font-family="Liberation Sans" textLength="16.600000000000023" lengthAdjust="spacingAndGlyphs" >Hide</text><rect x="653.1" y="495.6" width="55.60000000000002" height="13.899999999999977" fill="#c2c2c2"/><path d="M653.6,509.0 L653.6,496.1 L708.2,496.1" fill="none" stroke="#e8e8e8" stroke-width="1"/><path d="M653.6,509.0 L708.2,509.0 L708.2,496.1" fill="none" stroke="#8a8a8a" stroke-width="1"/><text x="661.8" y="506.10" font-size="9.4" fill="#141428" stroke="#141428" stroke-width="0.22" font-family="Liberation Sans" textLength="37.0" lengthAdjust="spacingAndGlyphs" >Unhide All</text><path d="M590.5,520 L590.5,514 L645.5,514 L645.5,520 M653.5,520 L653.5,514 L708.5,514 L708.5,520" fill="none" stroke="#e8e8e8"/><path d="M645.5,514.5 L645.5,520 M708.5,514.5 L708.5,520" fill="none" stroke="#8a8a8a"/><rect x="578" y="517" width="142" height="3" fill="#bdbdbd"/><line x1="578" y1="517" x2="720" y2="517" stroke="#e0e0e0"/></svg>
<svg class="a" style="left:0;top:0" width="720" height="520" viewBox="0 0 720 520"><defs><linearGradient id="tsg" x1="0" y1="0" x2="0" y2="1"><stop offset="0" stop-color="#c8c8c8"/><stop offset="1" stop-color="#bababa"/></linearGradient></defs><rect x="0" y="497.5" width="578" height="14" fill="url(#tsg)"/><path d="M-2,509.5 L15,509.5 L15,497.5" fill="none" stroke="#363636" stroke-width="1.7"/><rect x="17" y="497.5" width="11" height="12.8" fill="#c2c2c2"/><path d="M27.5,497.5 L27.5,510 L17,510" fill="none" stroke="#9a9a9a" stroke-width="1"/><line x1="16.5" y1="497.5" x2="16.5" y2="510" stroke="#dcdcdc"/><polyline points="19.8,502 24.6,504.6 19.8,507.2" fill="none" stroke="#2a3470" stroke-width="1.05"/><line x1="0" y1="511.3" x2="578" y2="511.3" stroke="#e4e4e4" stroke-width="1.2"/><line x1="0" y1="512.3" x2="578" y2="512.3" stroke="#9a9a9a" stroke-width="0.8"/><rect x="0" y="512.7" width="578" height="8" fill="#d0d0d0"/><line x1="0.70" y1="512.7" x2="0.70" y2="520" stroke="#9c9c9c" stroke-width="1.1"/><line x1="6.60" y1="512.7" x2="6.60" y2="520" stroke="#9c9c9c" stroke-width="1.1"/><line x1="12.49" y1="512.7" x2="12.49" y2="520" stroke="#9c9c9c" stroke-width="1.1"/><line x1="18.39" y1="512.7" x2="18.39" y2="520" stroke="#9c9c9c" stroke-width="1.1"/><line x1="24.28" y1="512.7" x2="24.28" y2="520" stroke="#9c9c9c" stroke-width="1.1"/><line x1="30.18" y1="512.7" x2="30.18" y2="520" stroke="#9c9c9c" stroke-width="1.1"/><line x1="36.08" y1="512.7" x2="36.08" y2="520" stroke="#9c9c9c" stroke-width="1.1"/><line x1="41.97" y1="512.7" x2="41.97" y2="520" stroke="#9c9c9c" stroke-width="1.1"/><line x1="47.87" y1="512.7" x2="47.87" y2="520" stroke="#9c9c9c" stroke-width="1.1"/><line x1="53.76" y1="512.7" x2="53.76" y2="520" stroke="#9c9c9c" stroke-width="1.1"/><line x1="59.66" y1="512.7" x2="59.66" y2="520" stroke="#9c9c9c" stroke-width="1.1"/><line x1="65.56" y1="512.7" x2="65.56" y2="520" stroke="#9c9c9c" stroke-width="1.1"/><line x1="71.45" y1="512.7" x2="71.45" y2="520" stroke="#9c9c9c" stroke-width="1.1"/><line x1="77.35" y1="512.7" x2="77.35" y2="520" stroke="#9c9c9c" stroke-width="1.1"/><line x1="83.24" y1="512.7" x2="83.24" y2="520" stroke="#9c9c9c" stroke-width="1.1"/><line x1="89.14" y1="512.7" x2="89.14" y2="520" stroke="#9c9c9c" stroke-width="1.1"/><line x1="95.04" y1="512.7" x2="95.04" y2="520" stroke="#9c9c9c" stroke-width="1.1"/><line x1="100.93" y1="512.7" x2="100.93" y2="520" stroke="#9c9c9c" stroke-width="1.1"/><line x1="106.83" y1="512.7" x2="106.83" y2="520" stroke="#9c9c9c" stroke-width="1.1"/><line x1="112.72" y1="512.7" x2="112.72" y2="520" stroke="#9c9c9c" stroke-width="1.1"/><line x1="118.62" y1="512.7" x2="118.62" y2="520" stroke="#9c9c9c" stroke-width="1.1"/><line x1="124.52" y1="512.7" x2="124.52" y2="520" stroke="#9c9c9c" stroke-width="1.1"/><line x1="130.41" y1="512.7" x2="130.41" y2="520" stroke="#9c9c9c" stroke-width="1.1"/><line x1="136.31" y1="512.7" x2="136.31" y2="520" stroke="#9c9c9c" stroke-width="1.1"/><line x1="142.20" y1="512.7" x2="142.20" y2="520" stroke="#9c9c9c" stroke-width="1.1"/><line x1="148.10" y1="512.7" x2="148.10" y2="520" stroke="#9c9c9c" stroke-width="1.1"/><line x1="154.00" y1="512.7" x2="154.00" y2="520" stroke="#9c9c9c" stroke-width="1.1"/><line x1="159.89" y1="512.7" x2="159.89" y2="520" stroke="#9c9c9c" stroke-width="1.1"/><line x1="165.79" y1="512.7" x2="165.79" y2="520" stroke="#9c9c9c" stroke-width="1.1"/><line x1="171.68" y1="512.7" x2="171.68" y2="520" stroke="#9c9c9c" stroke-width="1.1"/><line x1="177.58" y1="512.7" x2="177.58" y2="520" stroke="#9c9c9c" stroke-width="1.1"/><line x1="183.48" y1="512.7" x2="183.48" y2="520" stroke="#9c9c9c" stroke-width="1.1"/><line x1="189.37" y1="512.7" x2="189.37" y2="520" stroke="#9c9c9c" stroke-width="1.1"/><line x1="195.27" y1="512.7" x2="195.27" y2="520" stroke="#9c9c9c" stroke-width="1.1"/><line x1="201.16" y1="512.7" x2="201.16" y2="520" stroke="#9c9c9c" stroke-width="1.1"/><line x1="207.06" y1="512.7" x2="207.06" y2="520" stroke="#9c9c9c" stroke-width="1.1"/><line x1="212.96" y1="512.7" x2="212.96" y2="520" stroke="#9c9c9c" stroke-width="1.1"/><line x1="218.85" y1="512.7" x2="218.85" y2="520" stroke="#9c9c9c" stroke-width="1.1"/><line x1="224.75" y1="512.7" x2="224.75" y2="520" stroke="#9c9c9c" stroke-width="1.1"/><line x1="230.64" y1="512.7" x2="230.64" y2="520" stroke="#9c9c9c" stroke-width="1.1"/><line x1="236.54" y1="512.7" x2="236.54" y2="520" stroke="#9c9c9c" stroke-width="1.1"/><line x1="242.44" y1="512.7" x2="242.44" y2="520" stroke="#9c9c9c" stroke-width="1.1"/><line x1="248.33" y1="512.7" x2="248.33" y2="520" stroke="#9c9c9c" stroke-width="1.1"/><line x1="254.23" y1="512.7" x2="254.23" y2="520" stroke="#9c9c9c" stroke-width="1.1"/><line x1="260.12" y1="512.7" x2="260.12" y2="520" stroke="#9c9c9c" stroke-width="1.1"/><line x1="266.02" y1="512.7" x2="266.02" y2="520" stroke="#9c9c9c" stroke-width="1.1"/><line x1="271.92" y1="512.7" x2="271.92" y2="520" stroke="#9c9c9c" stroke-width="1.1"/><line x1="277.81" y1="512.7" x2="277.81" y2="520" stroke="#9c9c9c" stroke-width="1.1"/><line x1="283.71" y1="512.7" x2="283.71" y2="520" stroke="#9c9c9c" stroke-width="1.1"/><line x1="289.60" y1="512.7" x2="289.60" y2="520" stroke="#9c9c9c" stroke-width="1.1"/><line x1="295.50" y1="512.7" x2="295.50" y2="520" stroke="#9c9c9c" stroke-width="1.1"/><line x1="301.40" y1="512.7" x2="301.40" y2="520" stroke="#9c9c9c" stroke-width="1.1"/><line x1="307.29" y1="512.7" x2="307.29" y2="520" stroke="#9c9c9c" stroke-width="1.1"/><line x1="313.19" y1="512.7" x2="313.19" y2="520" stroke="#9c9c9c" stroke-width="1.1"/><line x1="319.08" y1="512.7" x2="319.08" y2="520" stroke="#9c9c9c" stroke-width="1.1"/><line x1="324.98" y1="512.7" x2="324.98" y2="520" stroke="#9c9c9c" stroke-width="1.1"/><line x1="330.88" y1="512.7" x2="330.88" y2="520" stroke="#9c9c9c" stroke-width="1.1"/><line x1="336.77" y1="512.7" x2="336.77" y2="520" stroke="#9c9c9c" stroke-width="1.1"/><line x1="342.67" y1="512.7" x2="342.67" y2="520" stroke="#9c9c9c" stroke-width="1.1"/><line x1="348.56" y1="512.7" x2="348.56" y2="520" stroke="#9c9c9c" stroke-width="1.1"/><line x1="354.46" y1="512.7" x2="354.46" y2="520" stroke="#9c9c9c" stroke-width="1.1"/><line x1="360.36" y1="512.7" x2="360.36" y2="520" stroke="#9c9c9c" stroke-width="1.1"/><line x1="366.25" y1="512.7" x2="366.25" y2="520" stroke="#9c9c9c" stroke-width="1.1"/><line x1="372.15" y1="512.7" x2="372.15" y2="520" stroke="#9c9c9c" stroke-width="1.1"/><line x1="378.04" y1="512.7" x2="378.04" y2="520" stroke="#9c9c9c" stroke-width="1.1"/><line x1="383.94" y1="512.7" x2="383.94" y2="520" stroke="#9c9c9c" stroke-width="1.1"/><line x1="389.84" y1="512.7" x2="389.84" y2="520" stroke="#9c9c9c" stroke-width="1.1"/><line x1="395.73" y1="512.7" x2="395.73" y2="520" stroke="#9c9c9c" stroke-width="1.1"/><line x1="401.63" y1="512.7" x2="401.63" y2="520" stroke="#9c9c9c" stroke-width="1.1"/><line x1="407.52" y1="512.7" x2="407.52" y2="520" stroke="#9c9c9c" stroke-width="1.1"/><line x1="413.42" y1="512.7" x2="413.42" y2="520" stroke="#9c9c9c" stroke-width="1.1"/><line x1="419.32" y1="512.7" x2="419.32" y2="520" stroke="#9c9c9c" stroke-width="1.1"/><line x1="425.21" y1="512.7" x2="425.21" y2="520" stroke="#9c9c9c" stroke-width="1.1"/><line x1="431.11" y1="512.7" x2="431.11" y2="520" stroke="#9c9c9c" stroke-width="1.1"/><line x1="437.00" y1="512.7" x2="437.00" y2="520" stroke="#9c9c9c" stroke-width="1.1"/><line x1="442.90" y1="512.7" x2="442.90" y2="520" stroke="#9c9c9c" stroke-width="1.1"/><line x1="448.80" y1="512.7" x2="448.80" y2="520" stroke="#9c9c9c" stroke-width="1.1"/><line x1="454.69" y1="512.7" x2="454.69" y2="520" stroke="#9c9c9c" stroke-width="1.1"/><line x1="460.59" y1="512.7" x2="460.59" y2="520" stroke="#9c9c9c" stroke-width="1.1"/><line x1="466.48" y1="512.7" x2="466.48" y2="520" stroke="#9c9c9c" stroke-width="1.1"/><line x1="472.38" y1="512.7" x2="472.38" y2="520" stroke="#9c9c9c" stroke-width="1.1"/><line x1="478.28" y1="512.7" x2="478.28" y2="520" stroke="#9c9c9c" stroke-width="1.1"/><line x1="484.17" y1="512.7" x2="484.17" y2="520" stroke="#9c9c9c" stroke-width="1.1"/><line x1="490.07" y1="512.7" x2="490.07" y2="520" stroke="#9c9c9c" stroke-width="1.1"/><line x1="495.96" y1="512.7" x2="495.96" y2="520" stroke="#9c9c9c" stroke-width="1.1"/><line x1="501.86" y1="512.7" x2="501.86" y2="520" stroke="#9c9c9c" stroke-width="1.1"/><line x1="507.76" y1="512.7" x2="507.76" y2="520" stroke="#9c9c9c" stroke-width="1.1"/><line x1="513.65" y1="512.7" x2="513.65" y2="520" stroke="#9c9c9c" stroke-width="1.1"/><line x1="519.55" y1="512.7" x2="519.55" y2="520" stroke="#9c9c9c" stroke-width="1.1"/><line x1="525.44" y1="512.7" x2="525.44" y2="520" stroke="#9c9c9c" stroke-width="1.1"/><line x1="531.34" y1="512.7" x2="531.34" y2="520" stroke="#9c9c9c" stroke-width="1.1"/><line x1="537.24" y1="512.7" x2="537.24" y2="520" stroke="#9c9c9c" stroke-width="1.1"/><rect x="538" y="512.7" width="40" height="8" fill="#c4c4c4"/></svg>
<svg class="a" style="left:0;top:0" width="720" height="520"><!--WATERMARK--><text x="360" y="484" font-family="Liberation Sans" font-style="italic" font-size="35" fill="#ffffff" fill-opacity="0.062" textLength="322" lengthAdjust="spacingAndGlyphs">www.dijitaldevrim</text></svg>
</body></html>
